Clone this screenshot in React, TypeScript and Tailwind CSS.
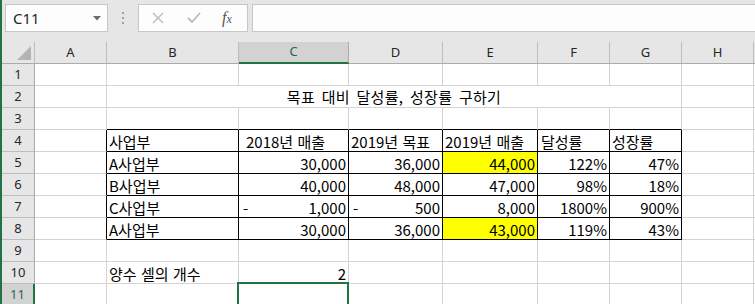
import React from "react";

const KR = { fontFamily: '"Noto Sans CJK KR", "Noto Sans", sans-serif', wordSpacing: "1px" };
const UI = { fontFamily: '"Noto Sans", "Liberation Sans", sans-serif' };

type Cell = {
  t?: string;
  a?: "l" | "r" | "c";
  dash?: boolean;
  bg?: string;
  pl?: string;
};

const cols = ["A", "B", "C", "D", "E", "F", "G", "H"];

const tableRows: Record<number, Cell[]> = {
  4: [
    { t: "사업부", a: "l" },
    { t: "2018년 매출", a: "l", pl: "pl-[7px]" },
    { t: "2019년 목표", a: "l" },
    { t: "2019년 매출", a: "l" },
    { t: "달성률", a: "l", pl: "pl-[3px]" },
    { t: "성장률", a: "l" },
  ],
  5: [
    { t: "A사업부", a: "l" },
    { t: "30,000", a: "r" },
    { t: "36,000", a: "r" },
    { t: "44,000", a: "r", bg: "y" },
    { t: "122%", a: "r" },
    { t: "47%", a: "r" },
  ],
  6: [
    { t: "B사업부", a: "l" },
    { t: "40,000", a: "r" },
    { t: "48,000", a: "r" },
    { t: "47,000", a: "r" },
    { t: "98%", a: "r" },
    { t: "18%", a: "r" },
  ],
  7: [
    { t: "C사업부", a: "l" },
    { t: "1,000", a: "r", dash: true },
    { t: "500", a: "r", dash: true },
    { t: "8,000", a: "r" },
    { t: "1800%", a: "r" },
    { t: "900%", a: "r" },
  ],
  8: [
    { t: "A사업부", a: "l" },
    { t: "30,000", a: "r" },
    { t: "36,000", a: "r" },
    { t: "43,000", a: "r", bg: "y" },
    { t: "119%", a: "r" },
    { t: "43%", a: "r" },
  ],
};

function ColHeader({ l }: { l: string }) {
  const sel = l === "C";
  return (
    <div
      className={
        "flex items-center justify-center border-r border-b text-[13px] " +
        (sel
          ? "bg-[#d2d2d2] text-[#1e6b45] border-b-2 border-b-[#217346] border-r-[#ababab]"
          : "bg-[#e6e6e6] text-[#262626] border-r-[#bdbdbd] border-b-[#ababab]")
      }
      style={UI}
    >
      {l}
    </div>
  );
}

function RowHeader({ n }: { n: number }) {
  const sel = n === 11;
  return (
    <div
      className={
        "flex items-center justify-center border-b text-[13px] " +
        (sel
          ? "bg-[#d2d2d2] text-[#1e6b45] border-r-2 border-r-[#217346] border-b-[#bdbdbd]"
          : "bg-[#e6e6e6] text-[#262626] border-r border-r-[#ababab] border-b-[#bdbdbd]")
      }
      style={UI}
    >
      {n}
    </div>
  );
}

function GridCell({
  cell,
  right,
  bottom,
  extra,
  children,
}: {
  cell?: Cell;
  right: string;
  bottom: string;
  extra?: string;
  children?: React.ReactNode;
}) {
  const bg = cell?.bg === "y" ? "bg-[#ffff00]" : "bg-white";
  const just =
    cell?.a === "r" ? "justify-end pr-[2px]" : cell?.a === "c" ? "justify-center" : "justify-start " + (cell?.pl ?? "pl-[2px]");
  return (
    <div
      className={`relative flex items-center border-r border-b ${right} ${bottom} ${bg} ${just} ${extra ?? ""} text-[15px] text-black leading-none pt-[2px] whitespace-nowrap`}
      style={KR}
    >
      {cell?.dash && <span className="absolute left-[4px] top-[4px]">-</span>}
      {cell?.t}
      {children}
    </div>
  );
}

export default function App() {
  const rows = [1, 2, 3, 4, 5, 6, 7, 8, 9, 10, 11];
  const G = "border-r-[#d4d4d4]";
  const GB = "border-b-[#d4d4d4]";
  const K = "border-r-black";
  const KB = "border-b-black";

  return (
    <div className="w-[755px] h-[304px] overflow-hidden bg-[#e6e6e6] border-l-2 border-[#217346]">
      {/* formula bar */}
      <div className="h-[42px] flex items-start pt-[4px] pl-[3px] gap-0">
        <div className="w-[103px] h-[28px] bg-[#fdfdfd] border border-[#c6c6c6] flex items-center justify-between pl-[7px] pr-[6px]">
          <span className="text-[15px] text-[#262626]" style={UI}>
            C11
          </span>
          <svg width="8" height="5" viewBox="0 0 8 5">
            <path d="M0 0 L8 0 L4 4.5 Z" fill="#6b6b6b" />
          </svg>
        </div>
        <div className="w-[30px] h-[28px] flex flex-col items-center justify-center gap-[3px]">
          <span className="w-[2px] h-[2px] bg-[#a0a0a0]" />
          <span className="w-[2px] h-[2px] bg-[#a0a0a0]" />
          <span className="w-[2px] h-[2px] bg-[#a0a0a0]" />
        </div>
        <div className="w-[110px] h-[28px] bg-[#fdfdfd] border border-[#c6c6c6] flex items-center">
          <svg width="12" height="12" viewBox="0 0 12 12" className="ml-[13px]">
            <path d="M1 1 L11 11 M11 1 L1 11" stroke="#b9b9b9" strokeWidth="1.4" />
          </svg>
          <svg width="14" height="12" viewBox="0 0 14 12" className="ml-[23px]">
            <path d="M1 6 L5 10 L13 1" stroke="#b9b9b9" strokeWidth="1.8" fill="none" />
          </svg>
          <span
            className="ml-[21px] text-[16px] italic text-[#555] leading-none"
            style={{ fontFamily: '"Liberation Serif", serif' }}
          >
            f<span className="text-[12px]">x</span>
          </span>
        </div>
        <div className="ml-[4px] flex-1 h-[28px] bg-[#fdfdfd] border border-[#c6c6c6] border-r-0" />
      </div>

      {/* sheet */}
      <div className="grid grid-cols-[33px_72px_132px_110px_94px_95px_72px_72px_72px_10px] grid-rows-[22px_repeat(11,22px)]">
        {/* corner */}
        <div className="relative bg-[#e6e6e6] border-r border-b border-r-[#bdbdbd] border-b-[#ababab]">
          <svg width="14" height="14" viewBox="0 0 14 14" className="absolute right-[3px] bottom-[3px]">
            <path d="M14 0 L14 14 L0 14 Z" fill="#b4b4b4" />
          </svg>
        </div>
        {cols.map((c) => (
          <ColHeader key={c} l={c} />
        ))}
        <div className="bg-[#e6e6e6] border-b border-b-[#ababab]" />

        {rows.map((r) => {
          const out: React.ReactNode[] = [<RowHeader key={`h${r}`} n={r} />];
          if (r === 2) {
            out.push(<GridCell key="a2" right={G} bottom={GB} />);
            out.push(
              <div
                key="t"
                className="col-span-6 flex items-center justify-center bg-white border-r border-b border-r-[#d4d4d4] border-b-[#d4d4d4] text-[15px] text-black pt-[2px]"
                style={{ ...KR, wordSpacing: "3px", letterSpacing: "0.3px" }}
              >
                목표 대비 달성률, 성장률 구하기
              </div>
            );
            out.push(<GridCell key="h2" right={G} bottom={GB} />);
          } else if (tableRows[r]) {
            out.push(<GridCell key={`a${r}`} right={K} bottom={GB} />);
            tableRows[r].forEach((cell, i) => {
              out.push(<GridCell key={`c${r}${i}`} cell={cell} right={K} bottom={KB} />);
            });
            out.push(<GridCell key={`h${r}x`} right={G} bottom={GB} />);
          } else {
            cols.forEach((c, i) => {
              let cell: Cell | undefined;
              let bottom = GB;
              if (r === 3 && i >= 1 && i <= 6) bottom = KB;
              if (r === 10 && c === "B") cell = { t: "양수 셀의 개수", a: "l" };
              if (r === 10 && c === "C") cell = { t: "2", a: "r" };
              const sel = r === 11 && c === "C";
              out.push(
                <GridCell key={`${c}${r}`} cell={cell} right={G} bottom={bottom}>
                  {sel && (
                    <>
                      <div className="absolute -left-[2px] -top-[2px] w-[112px] h-[26px] border-2 border-[#217346]" />
                      <div className="absolute -right-[3px] bottom-[-4px] w-[5px] h-[5px] bg-[#217346] border border-white" />
                    </>
                  )}
                </GridCell>
              );
            });
          }
          out.push(<div key={`e${r}`} className="bg-white border-b border-b-[#d4d4d4]" />);
          return out;
        })}
      </div>
    </div>
  );
}
